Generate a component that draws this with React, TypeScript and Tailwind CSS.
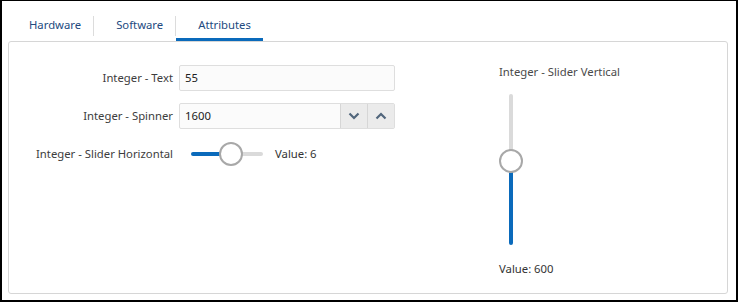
import React from 'react';

const font = { fontFamily: '"Noto Sans", "Open Sans", sans-serif' };

function Tab({ label, active, last }: { label: string; active?: boolean; last?: boolean }) {
  return (
    <div className="flex h-full items-stretch">
      <div
        className={
          'flex h-full items-center pl-[22px] pr-[12px] text-[11.3px] text-[#234a80] ' +
          (active ? 'border-b-[3px] border-[#0a6abb] pt-[12px]' : 'pt-[9px]')
        }
      >
        {label}
      </div>
      {!last && <div className="mb-[5px] h-[20px] w-px self-end bg-[#dcdcdc]" />}
    </div>
  );
}

function FormRow({ label, children }: { label: string; children: React.ReactNode }) {
  return (
    <div className="flex items-center">
      <div className="w-[170px] pr-[6px] text-right text-[11.3px] text-[#3d3d3d]">{label}</div>
      {children}
    </div>
  );
}

function Chevron({ up }: { up?: boolean }) {
  return (
    <svg width="12" height="8" viewBox="0 0 12 8">
      <path
        d={up ? 'M1.5 6.5 L6 2 L10.5 6.5' : 'M1.5 1.5 L6 6 L10.5 1.5'}
        fill="none"
        stroke="#51667c"
        strokeWidth="2.2"
      />
    </svg>
  );
}

export default function App() {
  return (
    <div
      className="flex h-[302px] w-[738px] flex-col border-x-2 border-t border-b-2 border-black bg-white"
      style={font}
    >
      <div className="flex h-[40px] items-stretch pl-[5px]">
        <Tab label="Hardware" />
        <Tab label="Software" />
        <Tab label="Attributes" active last />
      </div>
      <div className="mb-[6px] ml-[6px] mr-[8px] flex flex-1 rounded-[3px] border border-[#d6d6d6]">
        <div className="flex flex-col gap-[12px] pt-[23px]">
          <FormRow label="Integer - Text">
            <div className="flex h-[26px] w-[216px] items-center rounded-[2px] border border-[#dedede] bg-[#fbfbfb] px-[5px] text-[11.3px] text-[#222]">
              55
            </div>
          </FormRow>
          <FormRow label="Integer - Spinner">
            <div className="flex h-[26px] w-[216px] items-stretch rounded-[2px] border border-[#dedede] bg-[#fbfbfb] text-[11.3px] text-[#222]">
              <div className="flex flex-1 items-center px-[5px]">1600</div>
              <div className="flex w-[27px] items-center justify-center border-l border-[#d6d6d6] bg-[#ebebeb]">
                <Chevron />
              </div>
              <div className="flex w-[27px] items-center justify-center border-l border-[#d6d6d6] bg-[#ebebeb]">
                <Chevron up />
              </div>
            </div>
          </FormRow>
          <FormRow label="Integer - Slider Horizontal">
            <div className="flex h-[26px] items-center">
              <div className="ml-[12px] flex w-[72px] items-center">
                <div className="h-[4px] w-[40px] rounded-l-full bg-[#0a6abb]" />
                <div className="z-10 -mx-[12px] h-[24px] w-[24px] shrink-0 rounded-full border-2 border-[#a8a8a8] bg-white" />
                <div className="h-[4px] flex-1 rounded-r-full bg-[#dadada]" />
              </div>
              <div className="ml-[12px] text-[11.3px] text-[#333]">Value: 6</div>
            </div>
          </FormRow>
        </div>
        <div className="ml-[104px] flex flex-col pt-[22px]">
          <div className="text-[11.3px] text-[#4a4a4a]">Integer - Slider Vertical</div>
          <div className="mt-[13px] flex w-[24px] flex-col items-center">
            <div className="h-[57px] w-[4px] rounded-t-full bg-[#dadada]" />
            <div className="z-10 -my-[2px] h-[24px] w-[24px] rounded-full border-2 border-[#a8a8a8] bg-white" />
            <div className="h-[74px] w-[4px] rounded-b-full bg-[#0a6abb]" />
          </div>
          <div className="mt-[16px] text-[11.3px] text-[#333]">Value: 600</div>
        </div>
      </div>
    </div>
  );
}
